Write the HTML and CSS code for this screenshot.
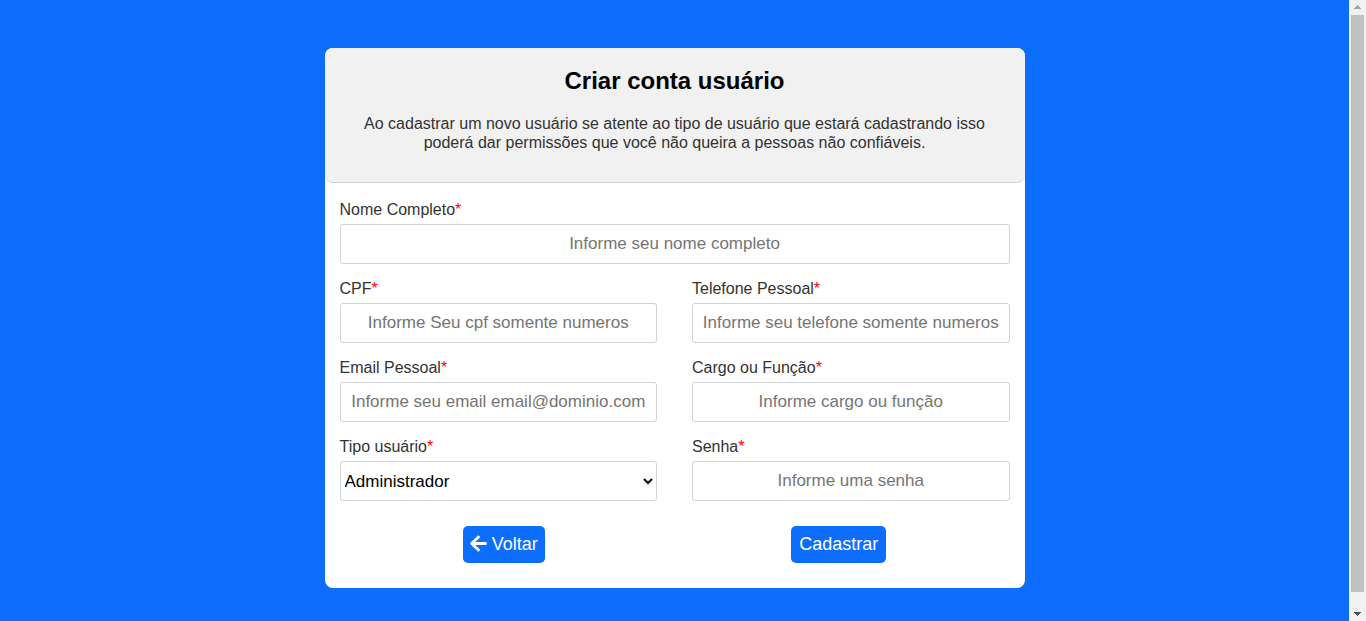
FILE: index.html
```html
<!DOCTYPE html>
<html lang="pt-BR">
<head>
<meta charset="utf-8">
<meta name="viewport" content="width=device-width, initial-scale=1">
<title>Criar conta usuário</title>
<link rel="stylesheet" href="styles.css">
</head>
<body class="page">
<main class="content">
  <form class="card">
    <header class="card-header">
      <h1 class="title">Criar conta usuário</h1>
      <p class="lead">Ao cadastrar um novo usuário se atente ao tipo de usuário que estará cadastrando isso poderá dar permissões que você não queira a pessoas não confiáveis.</p>
    </header>
    <div class="fields">
      <div class="field field-wide">
        <label class="label" for="nome">Nome Completo<span class="required">*</span></label>
        <input class="control" id="nome" type="text" placeholder="Informe seu nome completo">
      </div>
      <div class="field">
        <label class="label" for="cpf">CPF<span class="required">*</span></label>
        <input class="control" id="cpf" type="text" placeholder="Informe Seu cpf somente numeros">
      </div>
      <div class="field">
        <label class="label" for="telefone">Telefone Pessoal<span class="required">*</span></label>
        <input class="control" id="telefone" type="tel" placeholder="Informe seu telefone somente numeros">
      </div>
      <div class="field">
        <label class="label" for="email">Email Pessoal<span class="required">*</span></label>
        <input class="control" id="email" type="email" placeholder="Informe seu email email@dominio.com">
      </div>
      <div class="field">
        <label class="label" for="cargo">Cargo ou Função<span class="required">*</span></label>
        <input class="control" id="cargo" type="text" placeholder="Informe cargo ou função">
      </div>
      <div class="field">
        <label class="label" for="tipo">Tipo usuário<span class="required">*</span></label>
        <select class="control control-select" id="tipo">
          <option>Administrador</option>
        </select>
      </div>
      <div class="field">
        <label class="label" for="senha">Senha<span class="required">*</span></label>
        <input class="control" id="senha" type="password" placeholder="Informe uma senha">
      </div>
    </div>
    <div class="actions">
      <button class="button button-icon" type="button">
        <svg class="arrow" viewBox="0 0 448 512" aria-hidden="true"><path fill="currentColor" d="M257.5 445.1l-22.2 22.2c-9.4 9.4-24.6 9.4-33.9 0L7 273c-9.4-9.4-9.4-24.6 0-33.9L201.4 44.7c9.4-9.4 24.6-9.4 33.9 0l22.2 22.2c9.5 9.5 9.3 25-.4 34.3L136.6 216H424c13.3 0 24 10.7 24 24v32c0 13.3-10.7 24-24 24H136.6l120.5 114.8c9.8 9.3 10 24.8.4 34.3z"/></svg>
        <span>Voltar</span>
      </button>
      <button class="button" type="submit">Cadastrar</button>
    </div>
  </form>
</main>
<div class="scrollbar" aria-hidden="true">
  <svg class="scroll-arrow scroll-up" viewBox="0 0 7 4" shape-rendering="crispEdges"><path fill="currentColor" d="M3 0h1v1h1v1h1v1h1v1H0V3h1V2h1V1h1z"/></svg>
  <div class="scroll-thumb"></div>
  <svg class="scroll-arrow scroll-down" viewBox="0 0 7 4" shape-rendering="crispEdges"><path fill="currentColor" d="M0 0h7v1H6v1H5v1H4v1H3V3H2V2H1V1H0z"/></svg>
</div>
</body>
</html>
```

FILE: styles.css
```css
* {
  box-sizing: border-box;
}

.page {
  display: flex;
  margin: 0;
  min-height: 100vh;
  background: #0d6efd;
  font-family: "Liberation Sans", Arial, sans-serif;
  font-size: 16px;
  line-height: 18px;
  color: #333;
}

.content {
  flex: 1;
  padding: 48px 16px 32px;
}

.card {
  max-width: 700px;
  margin: 0 auto;
  background: #fff;
  border-radius: 8px;
}

.card-header {
  padding: 19px 32px 30px;
  background: #f1f1f1;
  border-bottom: 1px solid #ced4da;
  border-radius: 8px;
  text-align: center;
}

.title {
  margin: 0 0 19px;
  font-size: 24px;
  line-height: 28px;
  color: #000;
}

.lead {
  margin: 0;
  line-height: 19px;
}

.fields {
  display: grid;
  grid-template-columns: 1fr 1fr;
  gap: 16px 35px;
  padding: 18px 15px 25px;
}

.field {
  display: flex;
  flex-direction: column;
  gap: 5px;
  min-width: 0;
}

.field-wide {
  grid-column: 1 / -1;
}

.required {
  color: #f00;
}

.control {
  width: 100%;
  height: 40px;
  padding: 0 8px;
  border: 1px solid #ced4da;
  border-radius: 3px;
  background: #fff;
  font-family: inherit;
  font-size: 17px;
  color: #000;
  text-align: center;
}

.control::placeholder {
  color: #757575;
}

.control-select {
  padding: 0;
  text-align: left;
}

.actions {
  display: flex;
  justify-content: space-around;
  padding: 0 15px 25px;
}

.button {
  display: flex;
  align-items: center;
  gap: 5px;
  height: 37px;
  padding: 0 8px;
  border: 0;
  border-radius: 5px;
  background: #0d6efd;
  font-family: inherit;
  font-size: 18px;
  color: #fff;
}

.button-icon {
  padding: 0 7px;
}

.arrow {
  width: 17px;
  height: 19px;
  margin-bottom: 2px;
}

.scrollbar {
  position: sticky;
  top: 0;
  display: flex;
  flex-direction: column;
  align-items: center;
  width: 17px;
  height: 100vh;
  padding: 5px 2px;
  background: #f1f1f1;
}

.scroll-arrow {
  width: 7px;
  height: 4px;
}

.scroll-up {
  color: #a3a3a3;
}

.scroll-down {
  color: #505050;
}

.scroll-thumb {
  flex: 1;
  width: 13px;
  margin: 6px 0 20px;
  background: #c1c1c1;
}
```
